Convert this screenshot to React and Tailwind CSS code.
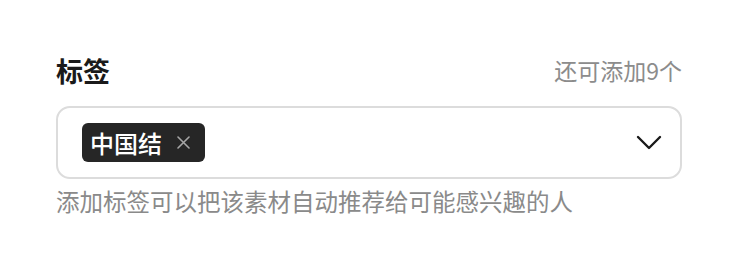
import { useState } from 'react';

const FONT = { fontFamily: '"Noto Sans CJK SC", "Noto Sans", sans-serif' };

export default function App() {
  const [tags, setTags] = useState(['中国结']);
  const max = 10;

  return (
    <div className="w-[740px] h-[272px] bg-white pl-[56px] pr-[58px] pt-[52px]" style={FONT}>
      {/* 标题行 */}
      <div className="flex items-center justify-between h-[36px]">
        <span className="text-[27px] font-bold text-[#1a1a1a] leading-none">标签</span>
        <span className="text-[23px] text-[#8c8c8c] leading-none">还可添加{max - tags.length}个</span>
      </div>

      {/* 选择框 */}
      <div className="mt-[18px] h-[73px] border-2 border-[#dcdcdc] rounded-[14px] flex items-center pl-[24px] pr-[18px]">
        <div className="flex-1 flex items-center gap-2">
          {tags.map(t => (
            <span
              key={t}
              className="h-[39px] flex items-center bg-[#262626] rounded-[6px] pl-[8px] pr-[15px] text-white text-[24px] font-medium leading-none"
            >
              {t}
              <button
                type="button"
                onClick={() => setTags(tags.filter(x => x !== t))}
                className="ml-[15px] flex items-center"
                title="删除"
              >
                <svg width="13" height="13" viewBox="0 0 13 13" fill="none">
                  <path d="M1 1L12 12M12 1L1 12" stroke="#a6a6a6" strokeWidth="1.6" strokeLinecap="round" />
                </svg>
              </button>
            </span>
          ))}
        </div>
        <svg width="26" height="16" viewBox="0 0 26 16" fill="none">
          <path d="M2 2L13 13L24 2" stroke="#1a1a1a" strokeWidth="2.4" strokeLinecap="round" strokeLinejoin="round" />
        </svg>
      </div>

      {/* 提示 */}
      <div className="mt-[6px] text-[23.5px] leading-[32px] text-[#8a8a8a]">
        添加标签可以把该素材自动推荐给可能感兴趣的人
      </div>
    </div>
  );
}
